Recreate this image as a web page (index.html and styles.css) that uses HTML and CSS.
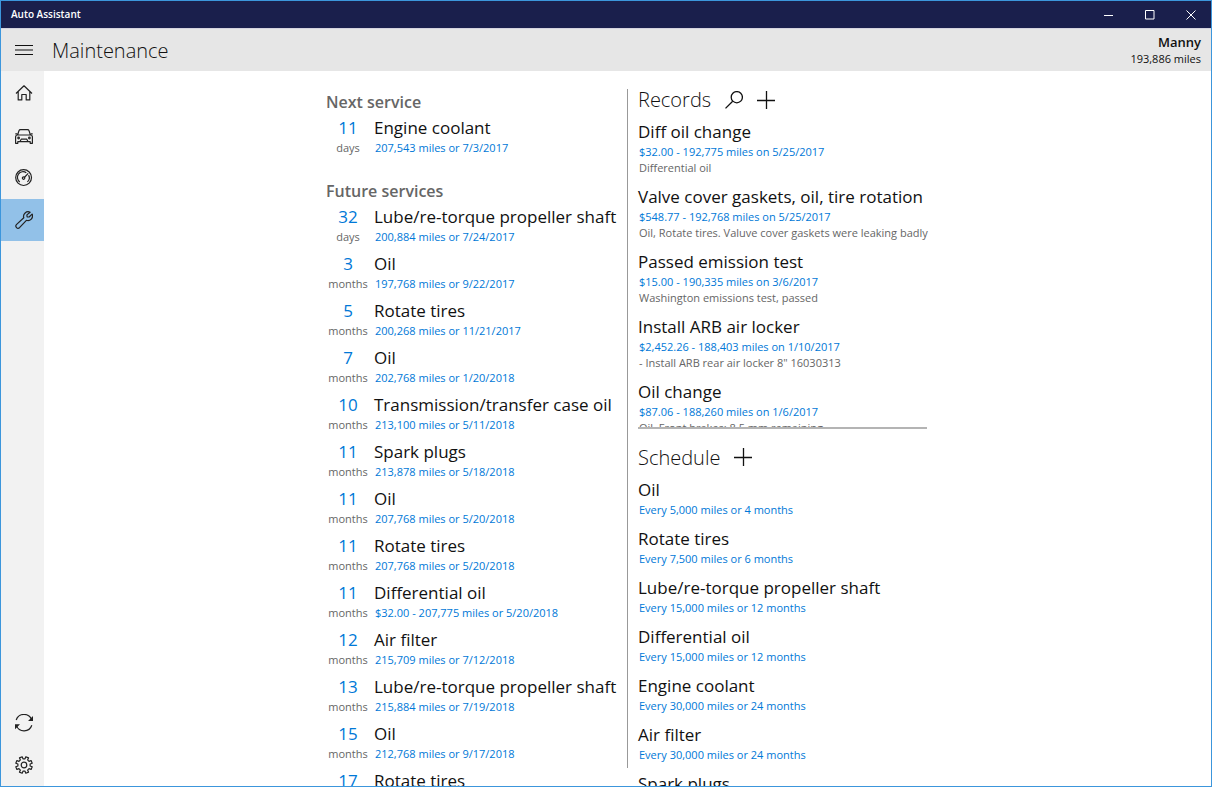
FILE: index.html
```html
<!DOCTYPE html>
<html lang="en">
<head>
    <meta charset="UTF-8">
    <meta name="viewport" content="width=device-width, initial-scale=1.0">
    <title>Auto Assistant</title>
    <link rel="stylesheet" href="styles.css">
</head>
<body>
    <div class="window">
        <div class="titlebar">
            <span class="app-name">Auto Assistant</span>
            <div class="window-controls">
                <button type="button" aria-label="Minimize">
                    <svg width="10" height="10" viewBox="0 0 10 10"><path d="M0 5.5h9"/></svg>
                </button>
                <button type="button" aria-label="Maximize">
                    <svg width="10" height="10" viewBox="0 0 10 10"><path d="M.5 .5h8.5v8.5H.5z"/></svg>
                </button>
                <button type="button" aria-label="Close">
                    <svg width="10" height="10" viewBox="0 0 10 10"><path d="M.5 .5l9 9M9.5 .5l-9 9"/></svg>
                </button>
            </div>
        </div>

        <header class="header">
            <button type="button" class="menu-button" aria-label="Menu">
                <svg width="18" height="18" viewBox="0 0 18 18"><path d="M0 4.5h18M0 9h18M0 13.5h18"/></svg>
            </button>
            <h1>Maintenance</h1>
            <div class="vehicle">
                <div class="vehicle-name">Manny</div>
                <div class="vehicle-miles">193,886 miles</div>
            </div>
        </header>

        <div class="main">
            <nav class="sidebar">
                <a href="#home" aria-label="Home">
                    <svg width="18" height="18" viewBox="0 0 18 18"><path d="M1 8.500L9 .8l8 7.700M3.200 6.800v8.100h3.600V9.500h4.400v5.400h3.600V6.800"/></svg>
                </a>
                <a href="#vehicle" aria-label="Vehicle">
                    <svg width="18" height="18" viewBox="0 0 18 18"><path d="M2.600 8L4 3.600C4.200 3 4.800 2.600 5.500 2.600h7c.7 0 1.300.4 1.500 1L15.400 8M2.600 8h12.800c1.300 0 2 .8 2 2v6.300h-2.200v-1.600H2.800v1.600H.6V10c0-1.200.7-2 2-2zM.3 6.800h1.900M15.800 6.800h1.900M5 14.500l1.200-2.300h5.600l1.200 2.300"/><circle cx="3.600" cy="11" r=".8"/><circle cx="14.400" cy="11" r=".8"/></svg>
                </a>
                <a href="#mileage" aria-label="Mileage">
                    <svg width="18" height="18" viewBox="0 0 18 18"><circle cx="8.600" cy="8.600" r="7.900"/><path d="M4.800 12.900a5.600 5.600 0 0 1 6.500-9.200M13.600 6.100a5.600 5.600 0 0 1-1.200 6.800M9.300 8.500l3.900-4.100"/><circle cx="8.600" cy="9.100" r="1.200"/></svg>
                </a>
                <a href="#maintenance" class="active" aria-label="Maintenance">
                    <svg width="18" height="18" viewBox="0 0 18 18"><path d="M15.100 1.200a4.600 4.600 0 0 0-6.300 5.600L1.400 13.600a2.200 2.200 0 0 0 3.100 3.100l6.900-7.400a4.600 4.600 0 0 0 5.700-6.200l-3 2.900-2-.2-.2-1.900z"/></svg>
                </a>
                <a href="#sync" class="first-bottom" aria-label="Sync">
                    <svg width="18" height="18" viewBox="0 0 18 18"><path d="M1.200 6a8.200 8.200 0 0 1 15.400-.4M16.800 11.200a8.200 8.200 0 0 1-15.400.4"/><path class="solid" d="M18 2v5h-5zM0 15.200v-5h5z"/></svg>
                </a>
                <a href="#settings" aria-label="Settings">
                    <svg width="18" height="18" viewBox="0 0 18 18"><path d="M15.100 10L17.200 10.800L16.100 13.500L14.050 12.600L12.600 14.050L13.500 16.100L10.800 17.200L10 15.100L8 15.100L7.200 17.200L4.500 16.100L5.400 14.050L3.950 12.600L1.900 13.500L.8 10.800L2.900 10L2.900 8L.8 7.200L1.900 4.500L3.950 5.400L5.400 3.950L4.500 1.900L7.200 .8L8 2.900L10 2.900L10.800 .8L13.500 1.900L12.600 3.950L14.050 5.400L16.100 4.500L17.200 7.200L15.100 8Z"/><circle cx="9" cy="9" r="2.800"/></svg>
                </a>
            </nav>

            <main class="content">
                <div class="services">
                    <section>
                        <h2>Next service</h2>
                        <ul>
                            <li><div class="due"><b>11</b><span>days</span></div><div><h3>Engine coolant</h3><p class="detail">207,543 miles or 7/3/2017</p></div></li>
                        </ul>
                    </section>
                    <section>
                        <h2>Future services</h2>
                        <ul>
                            <li><div class="due"><b>32</b><span>days</span></div><div><h3>Lube/re-torque propeller shaft</h3><p class="detail">200,884 miles or 7/24/2017</p></div></li>
                            <li><div class="due"><b>3</b><span>months</span></div><div><h3>Oil</h3><p class="detail">197,768 miles or 9/22/2017</p></div></li>
                            <li><div class="due"><b>5</b><span>months</span></div><div><h3>Rotate tires</h3><p class="detail">200,268 miles or 11/21/2017</p></div></li>
                            <li><div class="due"><b>7</b><span>months</span></div><div><h3>Oil</h3><p class="detail">202,768 miles or 1/20/2018</p></div></li>
                            <li><div class="due"><b>10</b><span>months</span></div><div><h3>Transmission/transfer case oil</h3><p class="detail">213,100 miles or 5/11/2018</p></div></li>
                            <li><div class="due"><b>11</b><span>months</span></div><div><h3>Spark plugs</h3><p class="detail">213,878 miles or 5/18/2018</p></div></li>
                            <li><div class="due"><b>11</b><span>months</span></div><div><h3>Oil</h3><p class="detail">207,768 miles or 5/20/2018</p></div></li>
                            <li><div class="due"><b>11</b><span>months</span></div><div><h3>Rotate tires</h3><p class="detail">207,768 miles or 5/20/2018</p></div></li>
                            <li><div class="due"><b>11</b><span>months</span></div><div><h3>Differential oil</h3><p class="detail">$32.00 - 207,775 miles or 5/20/2018</p></div></li>
                            <li><div class="due"><b>12</b><span>months</span></div><div><h3>Air filter</h3><p class="detail">215,709 miles or 7/12/2018</p></div></li>
                            <li><div class="due"><b>13</b><span>months</span></div><div><h3>Lube/re-torque propeller shaft</h3><p class="detail">215,884 miles or 7/19/2018</p></div></li>
                            <li><div class="due"><b>15</b><span>months</span></div><div><h3>Oil</h3><p class="detail">212,768 miles or 9/17/2018</p></div></li>
                            <li><div class="due"><b>17</b></div><div><h3>Rotate tires</h3></div></li>
                        </ul>
                    </section>
                </div>

                <div class="side">
                    <section class="records">
                        <div class="section-head">
                            <h2>Records</h2>
                            <button type="button" aria-label="Search records">
                                <svg width="18" height="18" viewBox="0 0 18 18"><circle cx="11.800" cy="6.200" r="5.600"/><path d="M7.700 10.200L.5 17.400"/></svg>
                            </button>
                            <button type="button" aria-label="Add record">
                                <svg width="18" height="18" viewBox="0 0 18 18"><path d="M0 9.500h18M9.500 0v18"/></svg>
                            </button>
                        </div>
                        <ul>
                            <li><h3>Diff oil change</h3><p class="detail">$32.00 - 192,775 miles on 5/25/2017</p><p class="note">Differential oil</p></li>
                            <li><h3>Valve cover gaskets, oil, tire rotation</h3><p class="detail">$548.77 - 192,768 miles on 5/25/2017</p><p class="note">Oil, Rotate tires. Valuve cover gaskets were leaking badly</p></li>
                            <li><h3>Passed emission test</h3><p class="detail">$15.00 - 190,335 miles on 3/6/2017</p><p class="note">Washington emissions test, passed</p></li>
                            <li><h3>Install ARB air locker</h3><p class="detail">$2,452.26 - 188,403 miles on 1/10/2017</p><p class="note">- Install ARB rear air locker 8" 16030313</p></li>
                            <li><h3>Oil change</h3><p class="detail">$87.06 - 188,260 miles on 1/6/2017</p><p class="note">Oil. Front brakes: 8.5 mm remaining</p></li>
                        </ul>
                    </section>
                    <section class="schedule">
                        <div class="section-head">
                            <h2>Schedule</h2>
                            <button type="button" aria-label="Add to schedule">
                                <svg width="18" height="18" viewBox="0 0 18 18"><path d="M0 9.500h18M9.500 0v18"/></svg>
                            </button>
                        </div>
                        <ul>
                            <li><h3>Oil</h3><p class="detail">Every 5,000 miles or 4 months</p></li>
                            <li><h3>Rotate tires</h3><p class="detail">Every 7,500 miles or 6 months</p></li>
                            <li><h3>Lube/re-torque propeller shaft</h3><p class="detail">Every 15,000 miles or 12 months</p></li>
                            <li><h3>Differential oil</h3><p class="detail">Every 15,000 miles or 12 months</p></li>
                            <li><h3>Engine coolant</h3><p class="detail">Every 30,000 miles or 24 months</p></li>
                            <li><h3>Air filter</h3><p class="detail">Every 30,000 miles or 24 months</p></li>
                            <li><h3>Spark plugs</h3></li>
                        </ul>
                    </section>
                </div>
            </main>
        </div>
    </div>
</body>
</html>
```
FILE: styles.css
```css
* {
    box-sizing: border-box;
}
body {
    margin: 0;
    font-family: "Open Sans", "Noto Sans", sans-serif;
    color: #111;
    background-color: white;
}
h1, h2, h3, p, ul {
    margin: 0;
    padding: 0;
}
ul {
    list-style: none;
}
button {
    display: flex;
    align-items: center;
    justify-content: center;
    padding: 0;
    border: none;
    background: none;
    color: inherit;
    cursor: pointer;
}
svg {
    display: block;
    fill: none;
    stroke: currentColor;
    stroke-width: 1.2;
    stroke-linejoin: round;
}
svg .solid {
    fill: currentColor;
    stroke: none;
}
.window {
    display: flex;
    flex-direction: column;
    height: 100vh;
    border: 1px solid #3c96dc;
    overflow: hidden;
}

/* title bar */
.titlebar {
    display: flex;
    justify-content: space-between;
    flex: none;
    height: 27px;
    background-color: #1a1f4c;
    color: white;
}
.app-name {
    padding-left: 10px;
    font-size: 10px;
    font-weight: 600;
    line-height: 26px;
}
.window-controls {
    display: flex;
}
.window-controls button {
    width: 41px;
}
.window-controls svg {
    stroke-width: 1;
    stroke-linejoin: miter;
}

/* page header */
.header {
    display: flex;
    align-items: center;
    flex: none;
    height: 43px;
    border-top: 1px solid #d4d3de;
    background-color: #e6e6e6;
}
.menu-button {
    width: 46px;
    height: 42px;
}
.menu-button svg {
    stroke-width: 1;
}
h1 {
    padding: 2px 0 0 5px;
    font-size: 20px;
    font-weight: 300;
    line-height: 28px;
}
.vehicle {
    margin-left: auto;
    padding-right: 10px;
    text-align: right;
}
.vehicle-name {
    font-size: 13px;
    font-weight: 600;
    line-height: 18px;
}
.vehicle-miles {
    font-size: 11px;
    line-height: 16px;
}

/* sidebar */
.main {
    display: flex;
    flex: 1;
    min-height: 0;
}
.sidebar {
    display: flex;
    flex-direction: column;
    flex: none;
    width: 43px;
    padding-top: 2px;
    background-color: #f2f2f2;
}
.sidebar a {
    display: flex;
    align-items: center;
    justify-content: center;
    height: 42px;
    padding-left: 3px;
    color: #222;
}
.sidebar .active {
    background-color: #92c1e8;
}
.sidebar .first-bottom {
    margin-top: auto;
}

/* content */
.content {
    display: grid;
    grid-template-columns: minmax(0, 301px) minmax(0, 300px);
    justify-content: center;
    flex: 1;
    min-height: 0;
    padding: 18px 2px 0 0;
}
.services {
    min-height: 0;
    overflow: hidden;
}
.services section {
    margin-bottom: 15px;
}
.services h2 {
    color: #666;
    font-size: 16px;
    font-weight: 600;
    line-height: 27px;
}
.services li {
    display: flex;
    gap: 4px;
    height: 47px;
}
.due {
    width: 44px;
    text-align: center;
}
.due b {
    display: block;
    color: #0078d7;
    font-size: 17px;
    font-weight: 400;
    line-height: 24px;
}
.due span {
    display: block;
    color: #666;
    font-size: 11px;
    line-height: 16px;
}
h3 {
    font-size: 17px;
    font-weight: 400;
    line-height: 24px;
    white-space: nowrap;
}
.detail {
    padding-left: 1px;
    color: #0078d7;
    font-size: 11px;
    font-weight: 500;
    line-height: 16px;
    white-space: nowrap;
}
.note {
    padding-left: 1px;
    color: #666;
    font-size: 11px;
    line-height: 16px;
    white-space: nowrap;
}
.side {
    display: flex;
    flex-direction: column;
    min-height: 0;
    margin-bottom: 18px;
    padding-left: 10px;
    border-left: 1px solid #999;
}
.section-head {
    display: flex;
    align-items: center;
    flex: none;
    gap: 14px;
    height: 21px;
    margin-bottom: 10px;
}
.section-head h2 {
    font-size: 20px;
    font-weight: 300;
    line-height: 21px;
}
.section-head svg {
    stroke-width: 1.3;
}
.records {
    display: flex;
    flex-direction: column;
    flex: 0 0 50%;
    min-height: 0;
    border-bottom: 2px solid #b4b4b4;
}
.records ul {
    flex: 1;
    min-height: 0;
    overflow-y: clip;
}
.records li {
    height: 65px;
}
.schedule {
    padding-top: 18px;
}
.schedule li {
    height: 49px;
}
```
